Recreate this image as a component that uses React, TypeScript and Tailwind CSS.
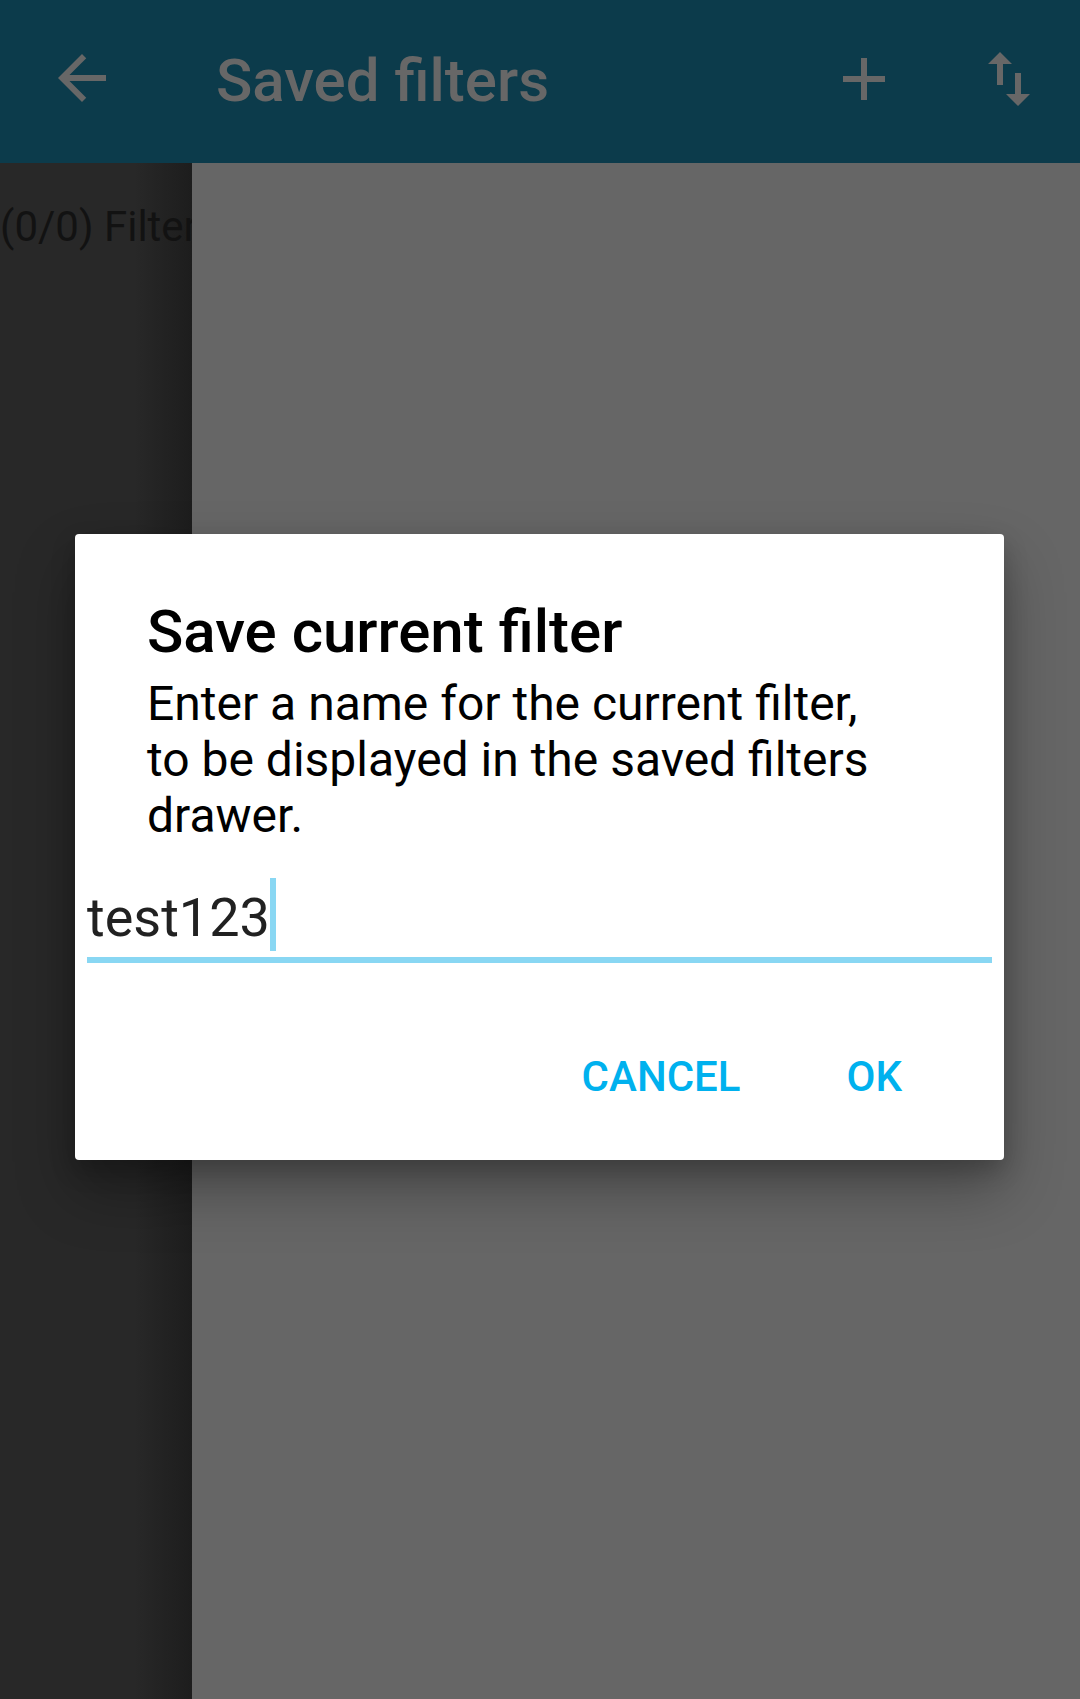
import React from 'react'

// Material glyphs, 24dp viewBox
const BACK = 'M20 11H7.83l5.59-5.59L12 4l-8 8 8 8 1.41-1.41L7.83 13H20v-2z'
const ADD = 'M19 13h-6v6h-2v-6H5v-2h6V5h2v6h6v2z'
const SWAP = 'M16 17.01V10h-2v7.01h-3L15 21l4-3.99h-3zM9 3L5 6.99h3V14h2V6.99h3L9 3z'

function Icon({ d }: { d: string }) {
  return (
    <svg viewBox="0 0 24 24" width={72} height={72} className="shrink-0 fill-[#676767]">
      <path d={d} />
    </svg>
  )
}

export default function App() {
  return (
    <div className="relative w-[1080px] h-[1699px] overflow-hidden font-['Roboto','Liberation_Sans',sans-serif]">
      {/* Toolbar */}
      <div className="flex items-start h-[163px] bg-[#0c3b4b] pl-[46px] pr-[35px]">
        <div className="mt-[42px]">
          <Icon d={BACK} />
        </div>
        <h1 className="ml-[98px] mt-[46px] text-[60px] leading-[70px] font-medium text-[#676767] whitespace-nowrap">
          Saved filters
        </h1>
        <div className="flex-1" />
        <div className="mt-[43px]">
          <Icon d={ADD} />
        </div>
        <div className="mt-[43px] ml-[73px]">
          <Icon d={SWAP} />
        </div>
      </div>

      {/* Body: drawer list (clipped by the drawer edge) + content */}
      <div className="flex h-[1536px]">
        <div className="w-[192px] shrink-0 overflow-hidden bg-[linear-gradient(to_right,#282828_70%,#1d1d1d_100%)] pt-[40px]">
          <div className="text-[42px] leading-[48px] text-[#121212] whitespace-nowrap">(0/0) Filters</div>
        </div>
        <div className="flex-1 bg-[#666666]" />
      </div>

      {/* Dialog */}
      <div className="absolute left-[75px] top-[534px] w-[929px] h-[626px] rounded-[4px] bg-white pt-[63px] shadow-[0_30px_60px_rgba(0,0,0,0.3),0_10px_24px_rgba(0,0,0,0.2)]">
        <h2 className="px-[72px] text-[60px] leading-[70px] font-medium text-black whitespace-nowrap">
          Save current filter
        </h2>
        <p className="mt-[9px] px-[72px] text-[48px] leading-[56px] text-black whitespace-nowrap">
          Enter a name for the current filter,
          <br />
          to be displayed in the saved filters
          <br />
          drawer.
        </p>

        <div className="mx-[12px] mt-[34px]">
          <div className="flex items-end h-[73px]">
            <span className="text-[54px] leading-[67px] text-[#212121]">test123</span>
            <span className="w-[6px] h-[73px] bg-[#89d7f3]" />
          </div>
          <div className="mt-[6px] h-[6px] bg-[#89d7f3]" />
        </div>

        <div className="flex justify-end items-start mt-[90px] pr-[102px] gap-[106px]">
          <span className="text-[42px] leading-[48px] font-medium text-[#00b1ee]">CANCEL</span>
          <span className="text-[42px] leading-[48px] font-medium text-[#00b1ee]">OK</span>
        </div>
      </div>
    </div>
  )
}
